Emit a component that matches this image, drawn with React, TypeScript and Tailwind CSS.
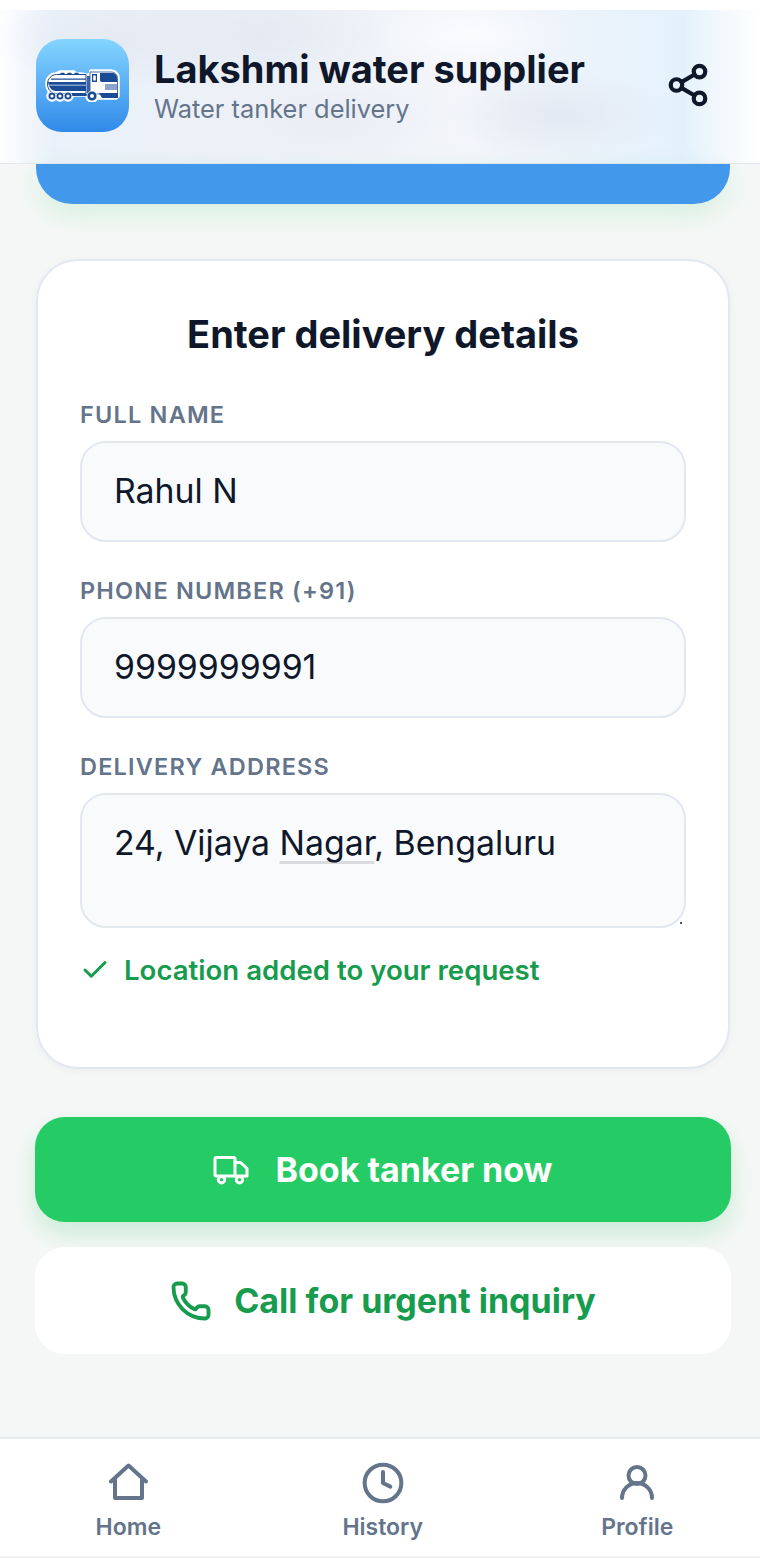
import React from "react";
import { Share2, Check, Phone, Clock } from "lucide-react";

const font = "font-['Inter','Liberation_Sans',sans-serif]";

function TankerLogo() {
  return (
    <svg viewBox="0 0 76 33" className="w-[76px] h-[33px] -ml-[1px]" aria-hidden="true">
      <g fill="#ffffff" stroke="#ffffff" strokeWidth="3.500" strokeLinejoin="round">
        <path d="M3 14c0-5 4-9 9-9l4-2h14l2 2h4c3 0 6 1 7 2v19H12c-5 0-9-5-9-12z" />
        <path d="M44 6h2l1-4h20c4 0 7 3 7 7v18l-2 2H44z" />
        <circle cx="8" cy="27" r="4" />
        <circle cx="16" cy="27" r="4" />
        <circle cx="24" cy="27" r="4" />
        <circle cx="48" cy="27" r="5" />
      </g>
      <path d="M3.500 15c0-5 4-9.500 9-9.500H42v19H12c-5 0-8.500-4.500-8.500-9.500z" fill="#ffffff" stroke="#1c4b96" strokeWidth="1" />
      <path d="M4 13h38v9H12c-4 0-7-3-8-9z" fill="#1c4b96" />
      <path d="M7 9.500h35v1.300H7z" fill="#1c4b96" />
      <path d="M5 15.500h37v1.500H5z" fill="#7fa0cf" />
      <path d="M17 4.500h3M24 4.500h3M31 4.500h3" stroke="#1c4b96" strokeWidth="1.400" strokeLinecap="round" />
      <path d="M43 7h3v18h-3z" fill="#3d66a8" />
      <path d="M46 3h21c4 0 6.500 3 6.500 6.500V25H46z" fill="#ffffff" stroke="#1c4b96" strokeWidth="0.800" />
      <path d="M48 5h5v8h-5z" fill="#1c4b96" />
      <path d="M49.200 6.500h2.600v5h-2.600z" fill="#ffffff" />
      <path d="M56 4h12c3 0 5 2 5 5v4H58c-1.500 0-2-1-2-2z" fill="#1c4b96" />
      <path d="M61 16h12M61 18h12M61 20h12" stroke="#1c4b96" strokeWidth="1" />
      <path d="M4 25h40v2H4z" fill="#1c4b96" />
      <path d="M55 24h19v5H58z" fill="#1c4b96" />
      {[8, 16, 24, 48].map((cx) => (
        <g key={cx}>
          <circle cx={cx} cy={27} r={cx === 48 ? 5 : 4} fill="#1c4b96" stroke="#ffffff" strokeWidth="0.800" />
          <circle cx={cx} cy={27} r={cx === 48 ? 2 : 1.600} fill="#ffffff" />
        </g>
      ))}
    </svg>
  );
}

const labelCls = "text-[23.500px] leading-[28px] font-semibold tracking-[1.200px] text-[#64748b]";

function Field({ label, value }: { label: string; value: string }) {
  return (
    <div>
      <div className={labelCls}>{label}</div>
      <div className="mt-[12px] h-[101px] rounded-[26px] border-2 border-[#e2e8f0] bg-[#f8fafc] px-[32px] flex items-center text-[33.800px] text-[#0f172a]">
        {value}
      </div>
    </div>
  );
}

function NavItem({ icon, label }: { icon: React.ReactNode; label: string }) {
  return (
    <div className="flex flex-col items-center w-[254.500px] shrink-0">
      <div className="h-[40px] flex items-center justify-center text-[#64748b]">{icon}</div>
      <span className="mt-[9px] text-[23px] leading-[30px] font-semibold text-[#64748b]">{label}</span>
    </div>
  );
}

export default function App() {
  return (
    <div className={`${font} relative w-[760px] h-[1562px] overflow-hidden flex flex-col bg-[#f5f7f6]`}>
      <div className="h-[10px] bg-white" />
      <header className="h-[154px] shrink-0 flex items-center pl-[36px] pr-[49px] border-b border-[#e2e8f0] bg-[radial-gradient(ellipse_130px_60px_at_260px_25px,#e4e9f2,transparent),radial-gradient(ellipse_120px_50px_at_120px_30px,#e4e9f2,transparent),radial-gradient(ellipse_110px_45px_at_560px_105px,#e3e9f2,transparent),radial-gradient(ellipse_110px_45px_at_330px_110px,#e9edf4,transparent),radial-gradient(ellipse_100px_40px_at_470px_25px,#fafbfd,transparent),linear-gradient(90deg,#fdfdfe_0%,#e9f1fa_7%,#edf1f7_30%,#f3f5fa_62%,#e4f1fc_90%,#f3f8fd_95%,#ffffff_100%)]">
        <div className="w-[93px] h-[93px] rounded-[26px] bg-gradient-to-b from-[#84d5ff] to-[#2f89e8] flex items-center justify-center shrink-0 mb-[3px]">
          <TankerLogo />
        </div>
        <div className="ml-[25px] flex-1 mb-[2px]">
          <div className="text-[38px] leading-[44px] font-bold text-[#0f172a]">Lakshmi water supplier</div>
          <div className="mt-[2px] text-[25.400px] leading-[32px] text-[#64748b]">Water tanker delivery</div>
        </div>
        <Share2 size={46} strokeWidth={2.200} className="text-[#0f172a] mb-[3px]" />
      </header>

      <main className="flex-1 pl-[36px] pr-[30px]">
        <div className="h-[40px] rounded-b-[36px] bg-[#4299ec] shadow-[0_10px_28px_rgba(34,197,94,0.14)]" />

        <section className="mt-[55px] h-[810px] rounded-[42px] border-2 border-[#e2e8f0] bg-white px-[42px] pt-[49px] shadow-[0_2px_8px_rgba(15,23,42,0.04)]">
          <h1 className="text-center text-[38px] leading-[48px] font-bold text-[#0f172a]">Enter delivery details</h1>
          <div className="mt-[43px] flex flex-col gap-[35px]">
            <Field label="FULL NAME" value="Rahul N" />
            <Field label="PHONE NUMBER (+91)" value="9999999991" />
            <div>
              <div className={labelCls}>DELIVERY ADDRESS</div>
              <div className="relative mt-[12px] h-[135px] rounded-[26px] border-2 border-[#e2e8f0] bg-[#f8fafc] px-[32px] pt-[27px] text-[33.800px] leading-[42px] text-[#0f172a]">
                24, Vijaya <span className="underline decoration-[#d9dbdf] decoration-[3px] underline-offset-[6px] [text-decoration-skip-ink:none]">Nagar</span>, Bengaluru
                <span className="absolute right-[2px] bottom-[2px] w-[2px] h-[2px] bg-[#555555]" />
              </div>
            </div>
          </div>
          <div className="mt-[24px] flex items-center gap-[14px] text-[#179b4d]">
            <Check size={30} strokeWidth={2.400} className="shrink-0" />
            <span className="text-[27.600px] leading-[36px] font-semibold">Location added to your request</span>
          </div>
        </section>

        <button className="mt-[48px] -ml-[1px] w-[696px] h-[105px] rounded-[30px] bg-[#25cc66] flex items-center justify-center gap-[26px] text-white text-[34px] font-bold shadow-[0_12px_24px_rgba(34,197,94,0.2)]">
          <svg viewBox="0 0 36 30" className="w-[36px] h-[30px]" fill="none" stroke="currentColor" strokeWidth="3" strokeLinecap="round" strokeLinejoin="round" aria-hidden="true">
            <path d="M3.500 2.500h17a1.500 1.500 0 0 1 1.500 1.500v17H3.500A1.500 1.500 0 0 1 2 19.500V4a1.500 1.500 0 0 1 1.500-1.500z" />
            <path d="M22 7.500h5.500l6.500 6V21H22" />
            <circle cx="8.500" cy="24.800" r="3.200" />
            <circle cx="26.500" cy="24.800" r="3.200" />
          </svg>
          <span>Book tanker now</span>
        </button>

        <button className="mt-[25px] -ml-[1px] w-[696px] h-[107px] rounded-[30px] bg-white flex items-center justify-center gap-[22px] text-[#179b4d] text-[34px] font-bold">
          <Phone size={42} strokeWidth={2.200} />
          <span>Call for urgent inquiry</span>
        </button>
      </main>

      <nav className="shrink-0 h-[125px] bg-white border-t-2 border-[#e5e9f0]">
        <div className="h-[119px] border-b-2 border-[#f0f1f3] flex items-start pl-[1px] pt-[24px]">
          <NavItem
            label="Home"
            icon={
              <svg viewBox="0 0 40 40" className="w-[40px] h-[40px]" fill="none" stroke="currentColor" strokeWidth="4" strokeLinecap="round" strokeLinejoin="round" aria-hidden="true">
                <path d="M3 18.500 20.500 2.500 38 18.500" />
                <path d="M7 17v18h27V17" />
              </svg>
            }
          />
          <NavItem label="History" icon={<Clock size={44} strokeWidth={2.200} className="shrink-0" />} />
          <NavItem
            label="Profile"
            icon={
              <svg viewBox="0 0 40 40" className="w-[40px] h-[40px]" fill="none" stroke="currentColor" strokeWidth="4" strokeLinecap="round" aria-hidden="true">
                <circle cx="20" cy="12.500" r="8.500" />
                <path d="M5 35a15 15 0 0 1 30 0" />
              </svg>
            }
          />
        </div>
      </nav>
    </div>
  );
}
